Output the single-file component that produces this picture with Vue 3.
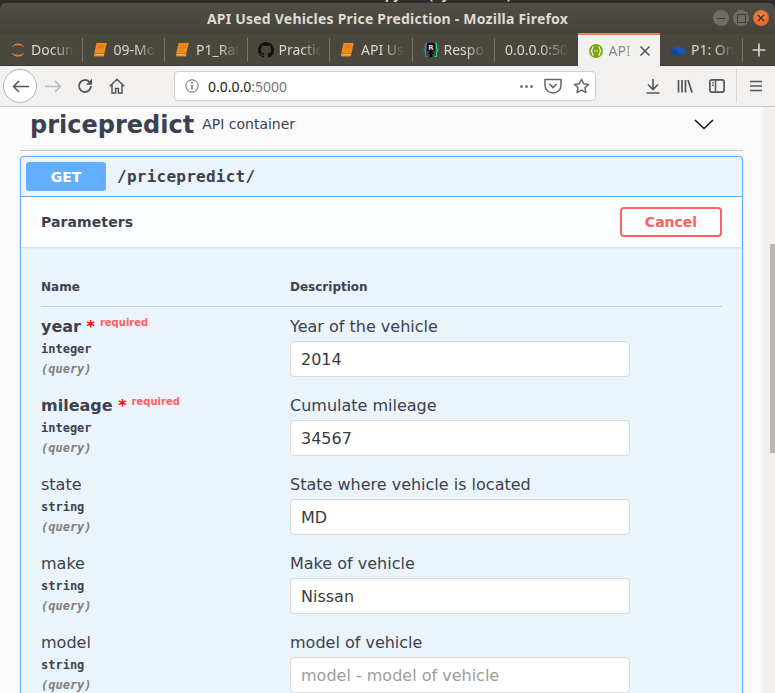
<template>
  <div class="window">
    <div class="behind"><span>Spyder (Python 3.7)</span></div>
    <div class="titlebar">
      <span class="win-title">API Used Vehicles Price Prediction - Mozilla Firefox</span>
      <div class="win-btns">
        <span class="win-btn"><i class="min"></i></span>
        <span class="win-btn"><i class="max"></i></span>
        <span class="win-btn close">
          <svg width="10" height="10" viewBox="0 0 10 10"><path d="M2 2l6 6M8 2l-6 6" stroke="#4a2410" stroke-width="1.4" /></svg>
        </span>
      </div>
    </div>

    <div class="tabstrip">
      <div v-for="tab in tabs" :key="tab.label" class="tab" :class="{ active: tab.active }">
        <span class="tab-icon">
          <svg v-if="tab.icon === 'ring'" width="16" height="16" viewBox="0 0 16 16" fill="none">
            <path d="M1.500 5.500C3 2.400 5.300 1.400 8 1.400s5 1 6.500 4.100C12.600 3.800 10.500 3.300 8 3.300s-4.600.5-6.500 2.200z" fill="#e8792b" />
            <path d="M1.500 10.500C3 13.600 5.300 14.600 8 14.600s5-1 6.500-4.100C12.600 12.200 10.500 12.700 8 12.700s-4.600-.5-6.500-2.200z" fill="#e8792b" />
          </svg>
          <svg v-else-if="tab.icon === 'book'" width="16" height="16" viewBox="0 0 16 16">
            <path d="M3.500 1h10.300l-2.400 10.500H1.200z" fill="#f08a1d" />
            <path d="M1.200 11.500h10.200l-.5 3H2.300C.7 14.500.4 12.500 1.200 11.500z" fill="#e8801a" />
            <path d="M2.200 12.800h8.600" stroke="#f9c48c" stroke-width="1" />
            <path d="M5 3.800h6.500M4.500 5.800h6.500" stroke="#d96f0c" stroke-width=".8" />
          </svg>
          <svg v-else-if="tab.icon === 'github'" width="16" height="16" viewBox="0 0 16 16">
            <path fill="#14120f" d="M8 0C3.580 0 0 3.580 0 8c0 3.540 2.290 6.530 5.470 7.590.4.070.55-.17.55-.38 0-.19-.01-.82-.01-1.490-2.010.370-2.530-.49-2.690-.94-.09-.23-.48-.94-.82-1.130-.28-.15-.68-.52-.01-.53.63-.01 1.080.58 1.230.82.72 1.210 1.870.87 2.330.66.070-.52.28-.87.51-1.070-1.780-.2-3.640-.89-3.640-3.950 0-.87.31-1.590.82-2.150-.08-.2-.36-1.020.08-2.120 0 0 .67-.21 2.200.82.64-.18 1.320-.27 2-.27.68 0 1.360.09 2 .27 1.530-1.040 2.200-.82 2.200-.82.44 1.100.16 1.920.08 2.120.51.56.82 1.270.82 2.150 0 3.070-1.870 3.750-3.650 3.950.29.25.54.73.54 1.480 0 1.070-.01 1.930-.01 2.200 0 .21.15.46.55.38A8.013 8.013 0 0016 8c0-4.420-3.580-8-8-8z" />
          </svg>
          <svg v-else-if="tab.icon === 'respo'" width="16" height="16" viewBox="0 0 16 16" fill="none">
            <path d="M4.500 1.500H2.500v5L1 8l1.500 1.500v5h2" stroke="#2b8be0" stroke-width="1.200" />
            <path d="M11.500 1.500h2v5L15 8l-1.500 1.500v5h-2" stroke="#1fd0a8" stroke-width="1.200" />
            <rect x="4" y="1" width="8" height="8" fill="#111" />
            <path d="M8 8l3.500 4H9.300v3H6.700v-3H4.500z" fill="#000" />
            <text x="8" y="7.500" text-anchor="middle" font-size="7" font-weight="700" fill="#d8d8d8" font-family="'DejaVu Sans', sans-serif">R</text>
          </svg>
          <svg v-else-if="tab.icon === 'swagger'" width="16" height="16" viewBox="0 0 16 16" fill="none">
            <circle cx="8" cy="8" r="7" fill="#7ba510" />
            <path d="M5.500 3.500C4 3.500 4.600 7.300 3.300 8c1.300.7.7 4.500 2.200 4.500M10.500 3.500c1.500 0 .9 3.800 2.200 4.500-1.300.7-.7 4.500-2.200 4.500" stroke="#fff" stroke-width="1.100" />
            <path d="M6 8h4" stroke="#fff" stroke-width="1.100" stroke-dasharray="1 .6" />
          </svg>
          <svg v-else-if="tab.icon === 'cloud'" width="16" height="16" viewBox="0 0 16 16">
            <path d="M4 7.500C5 4.300 8.800 3.400 10.400 5.800c2-.8 3.700.5 3.600 2.500 1.700.3 2.400 2 1.500 3.200-.3.4-.7.500-1.100.5H6.800z" fill="#1557c0" />
            <path d="M1.500 12.500C-.5 11.700-.2 8.800 2 8.500c.4-1.500 2.300-2.100 3.600-1.200l5 5.200z" fill="#0d47a8" />
          </svg>
        </span>
        <span class="tab-label">{{ tab.label }}</span>
        <svg v-if="tab.active" class="tab-close" width="12" height="12" viewBox="0 0 12 12"><path d="M1.500 1.500l9 9M10.500 1.500l-9 9" stroke="#555" stroke-width="1.500" /></svg>
      </div>
      <div class="newtab">
        <svg width="16" height="16" viewBox="0 0 16 16"><path d="M8 1.500v13M1.500 8h13" stroke="#d9d8d2" stroke-width="1.600" /></svg>
      </div>
    </div>

    <div class="toolbar">
      <span class="back">
        <svg width="17" height="13" viewBox="0 0 17 13" fill="none"><path d="M7 1L1.500 6.500 7 12M1.500 6.500H17" stroke="#555" stroke-width="1.600" /></svg>
      </span>
      <span class="tool fwd">
        <svg width="17" height="13" viewBox="0 0 17 13" fill="none"><path d="M10 1l5.500 5.500L10 12M15.500 6.500H0" stroke="#bbb" stroke-width="1.600" /></svg>
      </span>
      <span class="tool reload">
        <svg width="16" height="16" viewBox="0 0 16 16" fill="none"><path d="M14 8a6 6 0 1 1-1.800-4.300L14.500 6" stroke="#555" stroke-width="1.800" /><path d="M15 .8V6.800H9z" fill="#555" /></svg>
      </span>
      <span class="tool home">
        <svg width="16" height="16" viewBox="0 0 16 16" fill="none"><path d="M.8 8.200L8 1.300l7.200 6.900M3 6.600V15h3.600v-4.400h2.800V15H13V6.600" stroke="#555" stroke-width="1.500" /></svg>
      </span>
      <div class="urlbar">
        <svg class="info" width="14" height="14" viewBox="0 0 14 14" fill="none"><circle cx="7" cy="7" r="6.200" stroke="#666" stroke-width="1" /><path d="M7 6v4.500" stroke="#666" stroke-width="1.400" /><circle cx="7" cy="3.900" r=".9" fill="#666" /></svg>
        <span class="url">0.0.0.0<span class="port">:5000</span></span>
        <span class="dots"><i></i><i></i><i></i></span>
        <svg class="pocket" width="18" height="16" viewBox="0 0 18 16" fill="none"><path d="M1 1.500h16v6a8 7.500 0 0 1-16 0z" stroke="#666" stroke-width="1.500" /><path d="M5.500 6L9 9.500 12.500 6" stroke="#666" stroke-width="1.700" /></svg>
        <svg class="star" width="17" height="16" viewBox="0 0 17 16" fill="none"><path d="M8.500 1.300l2.100 4.500 4.900.6-3.600 3.300 1 4.900-4.400-2.500-4.400 2.500 1-4.900L1.500 6.400l4.900-.6z" stroke="#666" stroke-width="1.500" stroke-linejoin="round" /></svg>
      </div>
      <span class="tool download">
        <svg width="16" height="16" viewBox="0 0 16 16" fill="none"><path d="M8 1v10M3 6.500L8 11.500l5-5M1.500 15h13" stroke="#555" stroke-width="1.600" /></svg>
      </span>
      <span class="tool library">
        <svg width="16" height="16" viewBox="0 0 16 16" fill="none"><path d="M1.500 2v12.500M5 2v12.500M8.500 2v12.500M11 2l4 12.500" stroke="#555" stroke-width="1.700" /></svg>
      </span>
      <span class="tool sidebar">
        <svg width="16" height="14" viewBox="0 0 16 14" fill="none"><rect x=".9" y=".9" width="14.200" height="12.200" rx="2" stroke="#555" stroke-width="1.700" /><path d="M6.500 1v12" stroke="#555" stroke-width="1.500" /><path d="M3 3.800h1.800M3 6.300h1.800" stroke="#555" stroke-width="1.200" /></svg>
      </span>
      <span class="tool-sep"></span>
      <span class="tool menu">
        <svg width="14" height="12" viewBox="0 0 14 12"><path d="M1 1.500h12M1 6h12M1 10.500h12" stroke="#555" stroke-width="1.600" /></svg>
      </span>
    </div>

    <div class="viewport">
      <div class="page">
        <div class="tag-head">
          <span class="tag-name">pricepredict</span>
          <span class="tag-desc">API container</span>
          <svg class="chevron" width="20" height="20" viewBox="0 0 20 20" fill="none"><path d="M1 6l9 8.500L19 6" stroke="#111" stroke-width="1.500" /></svg>
        </div>
        <div class="opblock">
          <div class="op-summary">
            <span class="method">GET</span>
            <span class="op-path">/pricepredict/</span>
          </div>
          <div class="section-head">
            <span class="section-title">Parameters</span>
            <button class="cancel">Cancel</button>
          </div>
          <div class="params">
            <div class="param-cols">
              <span class="col-name">Name</span>
              <span class="col-desc">Description</span>
            </div>
            <div v-for="p in params" :key="p.name" class="param-row">
              <div class="param-left">
                <div class="param-name" :class="{ req: p.required }">
                  {{ p.name }}<template v-if="p.required"><span class="star-mark"> *</span><span class="req-text">required</span></template>
                </div>
                <div class="param-type">{{ p.type }}</div>
                <div class="param-in">(query)</div>
              </div>
              <div class="param-right">
                <div class="param-label">{{ p.label }}</div>
                <input class="param-input" :value="p.value" :placeholder="p.placeholder" />
              </div>
            </div>
          </div>
        </div>
      </div>
      <div class="scrollbar"><div class="thumb"></div></div>
    </div>
  </div>
</template>

<script setup>
const tabs = [
  { label: 'Documentation', icon: 'ring' },
  { label: '09-Model', icon: 'book' },
  { label: 'P1_Rate', icon: 'book' },
  { label: 'Practical', icon: 'github' },
  { label: 'API Used', icon: 'book' },
  { label: 'Response', icon: 'respo' },
  { label: '0.0.0.0:5000', icon: null },
  { label: 'API Docs', icon: 'swagger', active: true },
  { label: 'P1: OneDrive', icon: 'cloud' },
]

const params = [
  { name: 'year', type: 'integer', required: true, label: 'Year of the vehicle', value: '2014' },
  { name: 'mileage', type: 'integer', required: true, label: 'Cumulate mileage', value: '34567' },
  { name: 'state', type: 'string', label: 'State where vehicle is located', value: 'MD' },
  { name: 'make', type: 'string', label: 'Make of vehicle', value: 'Nissan' },
  { name: 'model', type: 'string', label: 'model of vehicle', value: '', placeholder: 'model - model of vehicle' },
]
</script>

<style>
html, body {
  margin: 0;
  background: #2f2d29;
}
</style>

<style scoped>
.window {
  width: 775px;
  height: 693px;
  overflow: hidden;
  display: flex;
  flex-direction: column;
  font-family: "DejaVu Sans", sans-serif;
}

/* window manager */
.behind {
  height: 3px;
  overflow: hidden;
  background: #2f2d29;
  color: #cfcdc6;
  font: 700 14px/3px "Noto Sans", sans-serif;
  flex: none;
  padding-left: 377px;
}
.behind span {
  display: block;
  transform: translateY(-8px);
}
.titlebar {
  height: 30px;
  flex: none;
  display: flex;
  align-items: center;
  justify-content: center;
  position: relative;
  background: linear-gradient(#514e47, #45423c);
  border-radius: 6px 6px 0 0;
}
.win-title {
  color: #dfdbd2;
  font: 700 14px "Noto Sans", sans-serif;
  letter-spacing: 0.22px;
}
.win-btns {
  position: absolute;
  right: 6px;
  top: 7px;
  display: flex;
  gap: 4px;
}
.win-btn {
  width: 16px;
  height: 16px;
  border-radius: 50%;
  background: #6f6c65;
  display: flex;
  align-items: center;
  justify-content: center;
}
.win-btn.close {
  background: radial-gradient(circle at 50% 40%, #f28a52, #d9541e);
}
.win-btn .min {
  width: 8px;
  height: 1px;
  background: #3b3934;
}
.win-btn .max {
  width: 7px;
  height: 7px;
  border: 1px solid #3b3934;
}

/* tabs */
.tabstrip {
  height: 33px;
  flex: none;
  display: flex;
  background: #4a473f;
  box-shadow: inset 0 -1px 0 #3a3833;
}
.tab {
  width: 82.5px;
  flex: none;
  box-sizing: border-box;
  display: flex;
  align-items: center;
  padding: 0 9px 0 10px;
  position: relative;
  color: #d9d7d0;
  font: 14px "Noto Sans", sans-serif;
}
.tab::after {
  content: "";
  position: absolute;
  right: 0;
  top: 5px;
  bottom: 4px;
  width: 1px;
  background: #75726a;
}
.tab.active {
  background: #f2f1ef;
  color: #8a8a8a;
  border-top: 2px solid #ef7d55;
}
.tab.active::after,
.tab:nth-child(7)::after {
  display: none;
}
.tab-icon {
  width: 16px;
  height: 16px;
  flex: none;
  margin-right: 5px;
  display: block;
}
.tab:nth-child(7) .tab-icon {
  display: none;
}
.tab-label {
  flex: 1;
  min-width: 0;
  overflow: hidden;
  white-space: nowrap;
  -webkit-mask-image: linear-gradient(to right, #000 55%, transparent);
  mask-image: linear-gradient(to right, #000 55%, transparent);
}
.tab-close {
  flex: none;
  margin-left: 2px;
}
.newtab {
  flex: 1;
  display: flex;
  align-items: center;
  justify-content: center;
}

/* toolbar */
.toolbar {
  height: 41px;
  flex: none;
  box-sizing: border-box;
  display: flex;
  align-items: center;
  padding: 0 11px 0 3px;
  background: #f2f1ef;
  border-bottom: 1px solid #c8c7c4;
}
.back {
  width: 34px;
  height: 34px;
  flex: none;
  border-radius: 50%;
  background: #fff;
  border: 1px solid #b5b4b1;
  box-sizing: border-box;
  display: flex;
  align-items: center;
  justify-content: center;
}
.tool {
  display: flex;
  align-items: center;
  justify-content: center;
  flex: none;
}
.fwd { margin-left: 8px; }
.reload { margin-left: 15px; }
.home { margin-left: 16px; }
.urlbar {
  width: 422px;
  height: 30px;
  flex: none;
  margin-left: 49px;
  box-sizing: border-box;
  display: flex;
  align-items: center;
  background: #fff;
  border: 1px solid #d0cfcc;
  border-radius: 4px;
  padding: 0 5px 0 10px;
}
.url {
  margin-left: 9px;
  color: #222;
  font: 14px "Noto Sans", sans-serif;
  flex: 1;
}
.port { color: #777; }
.dots {
  display: flex;
  gap: 2px;
}
.dots i {
  width: 3px;
  height: 3px;
  border-radius: 50%;
  background: #777;
}
.pocket { margin-left: 11px; }
.star { margin-left: 11px; }
.download { margin-left: 49px; }
.library { margin-left: 16px; }
.sidebar { margin-left: 16px; }
.tool-sep {
  width: 1px;
  height: 34px;
  background: #d6d5d2;
  margin-left: 11px;
  flex: none;
}
.menu { margin-left: 12px; }

/* swagger page */
.viewport {
  flex: 1;
  min-height: 0;
  display: flex;
}
.page {
  width: 763px;
  flex: none;
  box-sizing: border-box;
  background: #fafafa;
  padding: 0 20px;
  color: #3b4151;
  overflow: hidden;
}
.scrollbar {
  flex: 1;
  background: #f1f0ee;
  display: flex;
  justify-content: flex-end;
}
.thumb {
  width: 5px;
  height: 209px;
  margin-top: 137px;
  background: #b9b8b5;
}
.tag-head {
  height: 43px;
  display: flex;
  align-items: flex-start;
  padding-left: 10px;
  border-bottom: 1px solid #c7c8ca;
  margin-bottom: 5px;
  position: relative;
}
.tag-name {
  font-size: 24px;
  font-weight: 700;
  line-height: 36px;
}
.tag-desc {
  font-size: 14px;
  margin: 9px 0 0 8px;
}
.chevron {
  position: absolute;
  right: 29px;
  top: 7px;
}
.opblock {
  border: 1px solid #61affe;
  border-bottom: 0;
  border-radius: 4px 4px 0 0;
  background: #ebf3fb;
  width: 723px;
  box-sizing: border-box;
  box-shadow: 0 0 3px rgba(0, 0, 0, 0.1);
}
.op-summary {
  height: 40px;
  box-sizing: border-box;
  border-bottom: 1px solid #61affe;
  display: flex;
  align-items: center;
  padding: 0 5px;
}
.method {
  width: 80px;
  height: 29px;
  border-radius: 3px;
  background: #61affe;
  color: #fff;
  font-size: 14px;
  font-weight: 700;
  display: flex;
  align-items: center;
  justify-content: center;
}
.op-path {
  margin-left: 11px;
  font: 700 16px "DejaVu Sans Mono", monospace;
  letter-spacing: 0.25px;
  color: #3b4151;
}
.section-head {
  height: 50px;
  box-sizing: border-box;
  display: flex;
  align-items: center;
  justify-content: space-between;
  padding: 0 20px;
  background: rgba(255, 255, 255, 0.8);
  box-shadow: 0 1px 2px rgba(0, 0, 0, 0.1);
}
.section-title {
  font-size: 14px;
  font-weight: 700;
  letter-spacing: 0.1px;
}
.cancel {
  width: 102px;
  height: 30px;
  box-sizing: border-box;
  border: 2px solid #ff6060;
  border-radius: 4px;
  background: transparent;
  color: #ff6060;
  font: 700 14px "DejaVu Sans", sans-serif;
  padding: 0;
}
.params {
  padding: 30px 20px 0;
}
.param-cols {
  display: flex;
  height: 26px;
  padding-top: 3px;
  border-bottom: 1px solid #c9d0da;
  font-size: 12px;
  font-weight: 700;
}
.col-name {
  width: 249px;
}
.param-row {
  display: flex;
  height: 79px;
  box-sizing: border-box;
  padding-top: 10px;
}
.param-left {
  width: 249px;
  flex: none;
}
.param-name {
  font-size: 16px;
  line-height: 20px;
}
.param-name.req {
  font-weight: 700;
}
.star-mark {
  color: #f00;
  font-size: 16px;
  font-weight: 700;
  line-height: 0;
}
.req-text {
  color: #ff6060;
  font-size: 10px;
  font-weight: 700;
  margin-left: 5px;
  line-height: 0;
  position: relative;
  top: -6px;
}
.param-type {
  font: 700 12px/20px "DejaVu Sans Mono", monospace;
  margin-top: 2px;
}
.param-in {
  font: italic 600 12px/20px "DejaVu Sans Mono", monospace;
  color: #808080;
}
.param-label {
  font-size: 16px;
  line-height: 20px;
}
.param-input {
  display: block;
  width: 340px;
  height: 36px;
  box-sizing: border-box;
  margin-top: 4px;
  padding: 0 10px;
  border: 1px solid #d9d9d9;
  border-radius: 4px;
  background: #fff;
  font: 16px "DejaVu Sans", sans-serif;
  color: #3b3b3b;
  outline: none;
}
.param-input::placeholder {
  color: #a09c98;
  opacity: 1;
}
</style>
